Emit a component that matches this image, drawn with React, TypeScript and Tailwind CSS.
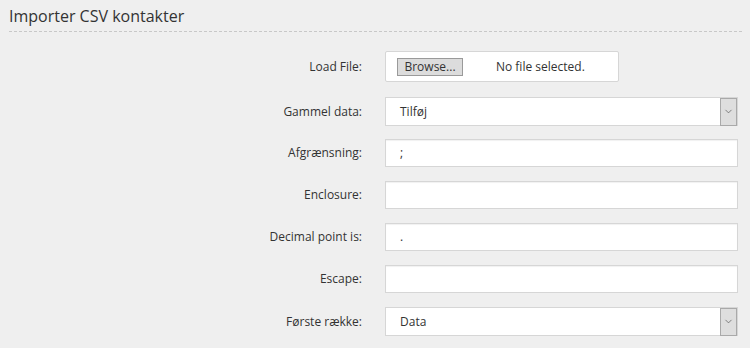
import { ChevronDown } from 'lucide-react';

const font = { fontFamily: '"Open Sans", "Noto Sans", sans-serif' };

function Label({ text }: { text: string }) {
  return <div className="w-[362px] shrink-0 text-right text-[12px] text-[#333]">{text}</div>;
}

function TextRow({ label, value }: { label: string; value?: string }) {
  return (
    <div className="flex h-[28px] items-center gap-[23px]">
      <Label text={label} />
      <div className="flex h-[28px] w-[353px] items-center border border-[#d6d6d6] bg-white pl-[14px] text-[12px] text-[#333] shadow-[inset_0_1px_1px_rgba(0,0,0,0.06)]">
        {value}
      </div>
    </div>
  );
}

function SelectRow({ label, value }: { label: string; value: string }) {
  return (
    <div className="flex h-[29px] items-center gap-[23px]">
      <Label text={label} />
      <div className="flex h-[29px] w-[353px] items-center border border-[#d6d6d6] bg-white text-[12px] text-[#333]">
        <span className="flex-1 pl-[14px]">{value}</span>
        <div className="flex h-[28px] w-[17px] items-center justify-center border border-[#a9a9a9] bg-[#dedede]">
          <ChevronDown className="h-[11px] w-[11px] text-[#555]" strokeWidth={1.5} />
        </div>
      </div>
    </div>
  );
}

export default function App() {
  return (
    <div className="min-h-[348px] w-[750px] bg-[#efefef]" style={font}>
      <div className="px-[9px] pt-[5px]">
        <h1 className="text-[16px] leading-[22px] text-[#333]">Importer CSV kontakter</h1>
        <div className="mt-[4px] w-[733px] border-t border-dashed border-[#c8c8c8]" />
      </div>

      <div className="mt-[19px] flex flex-col">
        {/* Load file */}
        <div className="flex h-[31px] items-center gap-[23px]">
          <Label text="Load File:" />
          <div className="flex h-[31px] w-[234px] items-center rounded-[2px] border border-[#d6d6d6] bg-white pl-[11px] text-[12px] text-[#333]">
            <div className="flex h-[18px] w-[66px] items-center justify-center border border-[#9a9a9a] bg-[#dcdcdc]">
              Browse...
            </div>
            <span className="ml-[33px]">No file selected.</span>
          </div>
        </div>

        <div className="mt-[15px] flex flex-col gap-[13px]">
          <SelectRow label="Gammel data:" value="Tilføj" />
          <div className="flex flex-col gap-[14px]">
            <TextRow label="Afgrænsning:" value=";" />
            <TextRow label="Enclosure:" />
            <TextRow label="Decimal point is:" value="." />
            <TextRow label="Escape:" />
            <SelectRow label="Første række:" value="Data" />
          </div>
        </div>
      </div>
    </div>
  );
}
